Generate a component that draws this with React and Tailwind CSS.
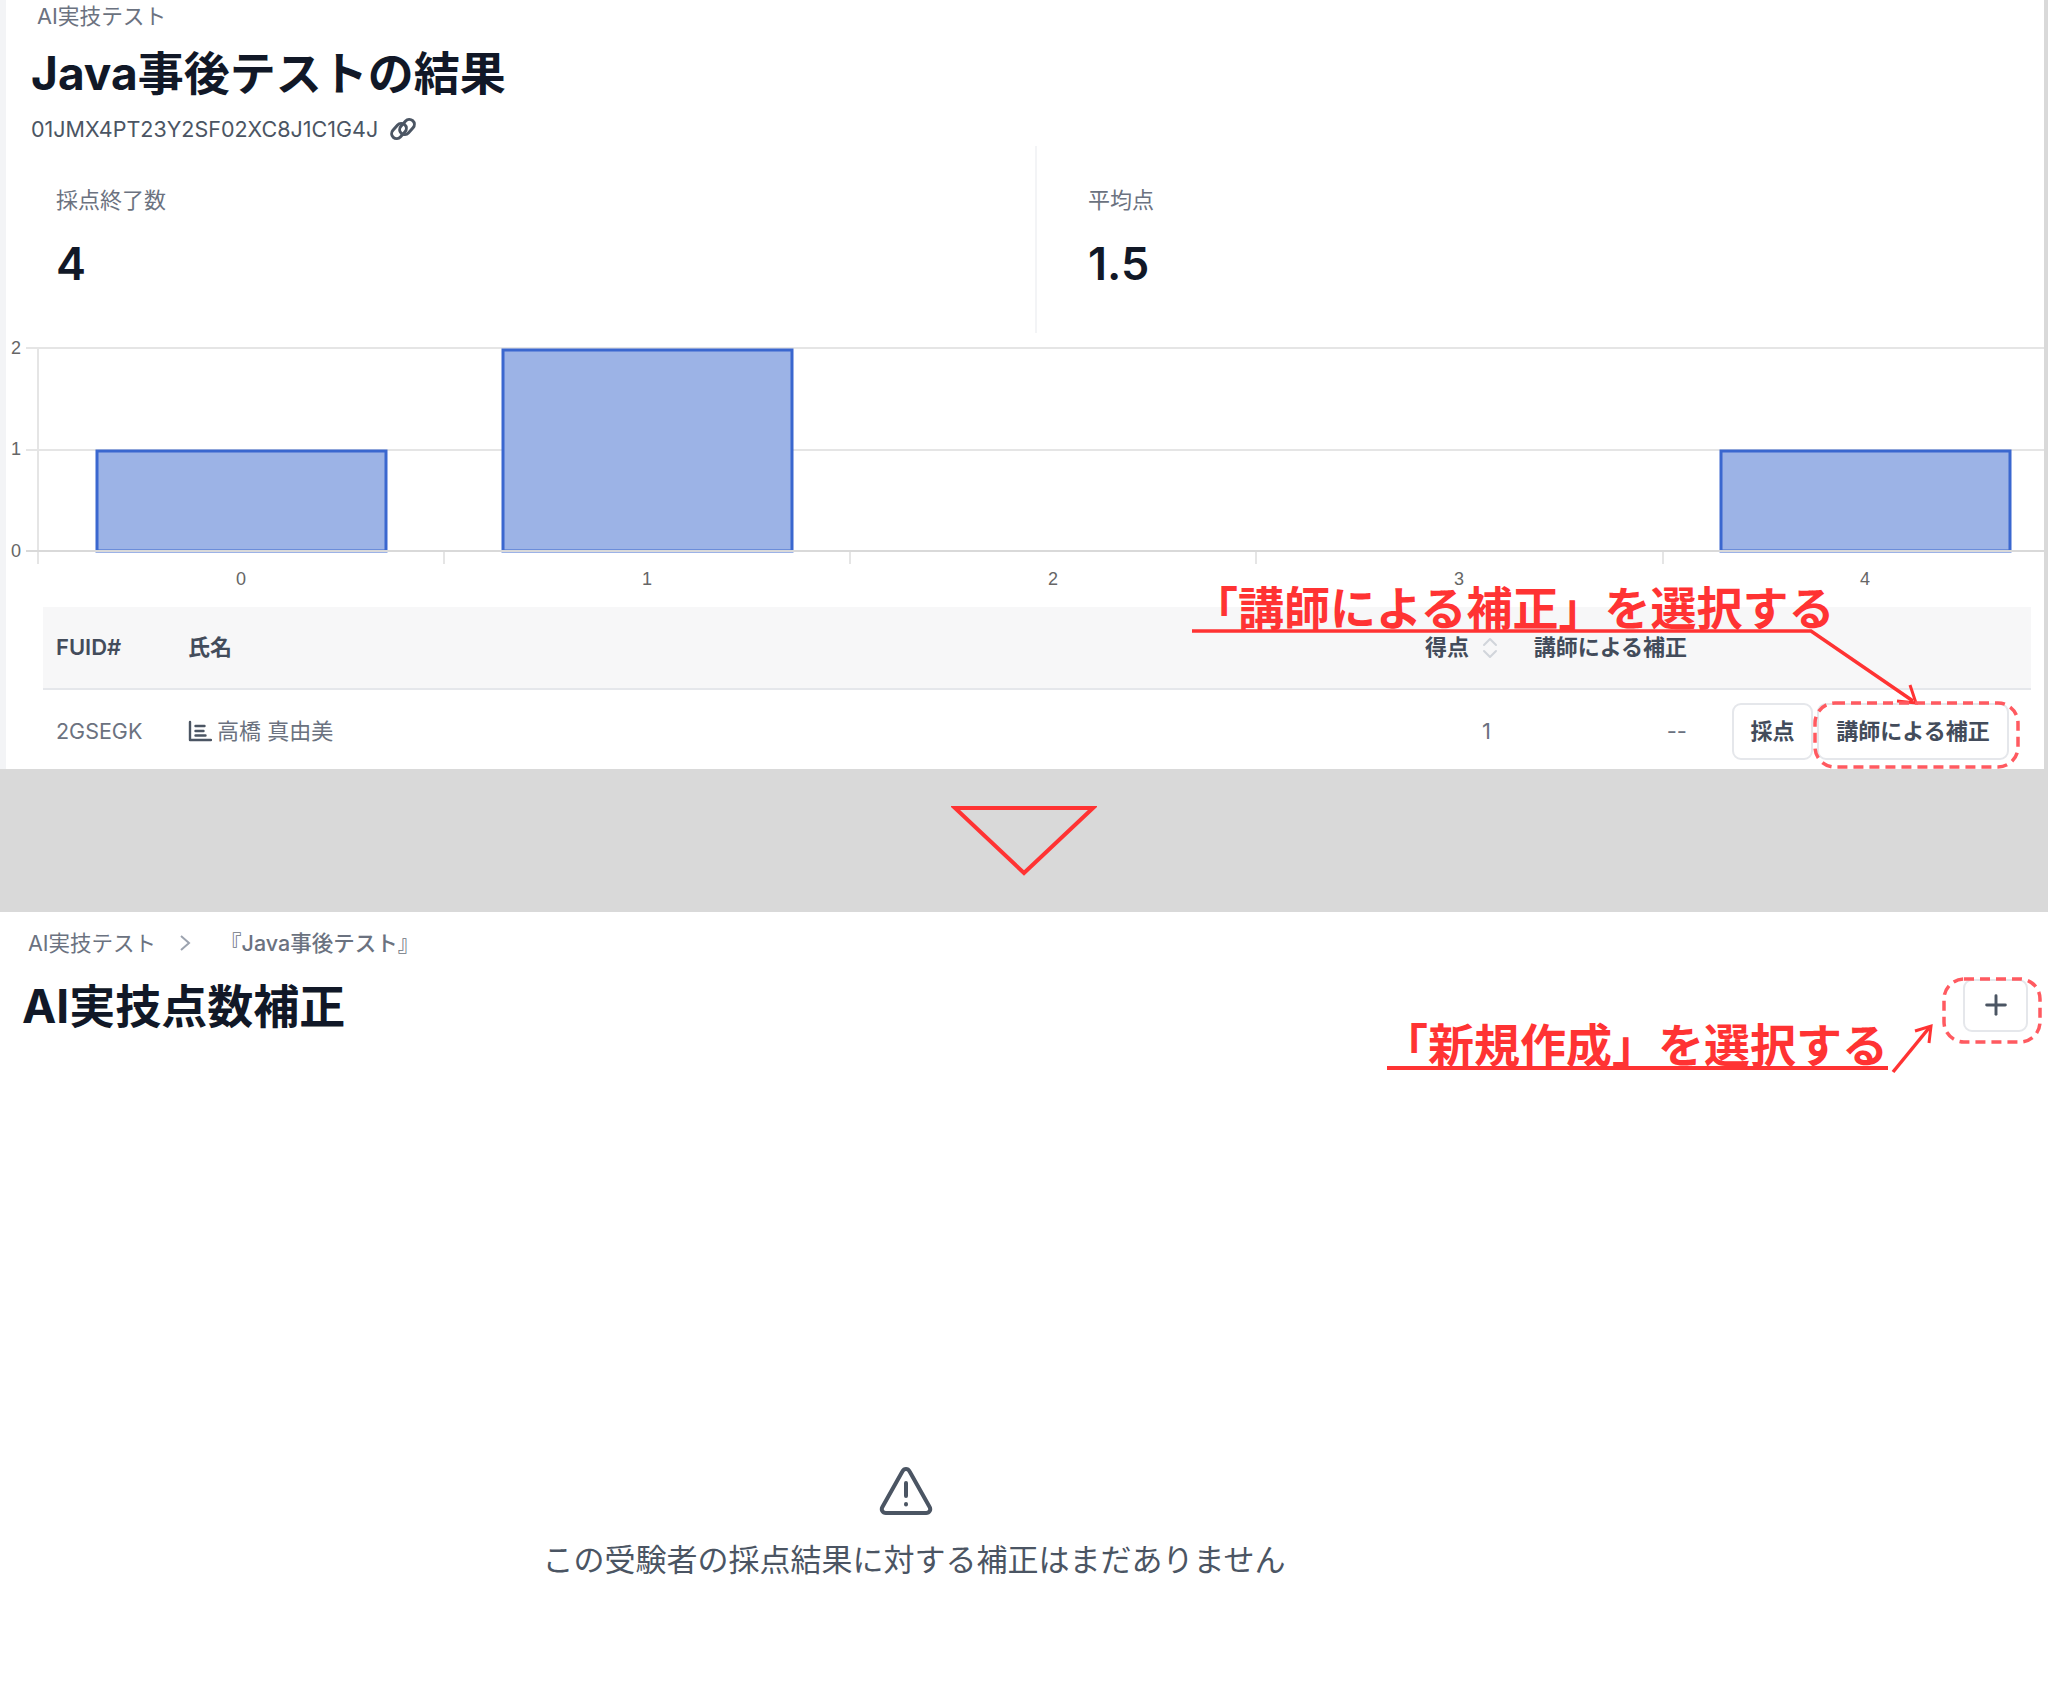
import React from "react";
import { Plus } from "lucide-react";

const RED = "#ff3333";
const DASH = "#ff5a60";

const Stat = ({ label, value, className }) => (
  <div className={`h-full pt-[38px] ${className}`}>
    <div className="text-[22px] leading-[32px] text-[#6b7280]">{label}</div>
    <div className="mt-[18px] text-[45px] leading-[60px] font-semibold text-[#111827]">{value}</div>
  </div>
);

const Chart = () => {
  const ticks = [38, 444, 850, 1256, 1663];
  const bars = [
    { x: 97, w: 289, top: 451 },
    { x: 503, w: 289, top: 350 },
    { x: 1721, w: 289, top: 451 },
  ];
  const labels = [241, 647, 1053, 1459, 1865];
  return (
    <svg className="block" width="2038" height="262" viewBox="6 333 2038 262">
      <g stroke="#e5e5e5" strokeWidth="2" fill="none">
        <path d="M26 348H2044M26 450H2044M38 348V564" />
        {ticks.slice(1).map((t) => (
          <path key={t} d={`M${t} 551V564`} />
        ))}
      </g>
      {bars.map((b) => (
        <rect key={b.x} x={b.x} y={b.top} width={b.w} height={551 - b.top} fill="#9cb3e6" stroke="#3a67cf" strokeWidth="3" />
      ))}
      <path d="M26 551H2044" stroke="#d9d9d9" strokeWidth="2" />
      <g fontFamily="Liberation Sans, sans-serif" fontSize="18" fill="#666666">
        <text x="16" y="354" textAnchor="middle">2</text>
        <text x="16" y="455" textAnchor="middle">1</text>
        <text x="16" y="557" textAnchor="middle">0</text>
        {labels.map((x, i) => (
          <text key={x} x={x} y="585" textAnchor="middle">{i}</text>
        ))}
      </g>
    </svg>
  );
};

const LinkIcon = () => (
  <svg width="28" height="28" viewBox="0 0 28 28" fill="none" stroke="#4b5563" strokeWidth="3">
    <rect x="1.500" y="11" width="17" height="10" rx="5" transform="rotate(-48 10 16)" />
    <rect x="9.500" y="7" width="17" height="10" rx="5" transform="rotate(-48 18 12)" />
  </svg>
);

const SortIcon = () => (
  <svg width="20" height="24" viewBox="0 0 20 24" fill="none" stroke="#d1d5db" strokeWidth="2" strokeLinecap="round" strokeLinejoin="round">
    <path d="M4 9l6-6 6 6M4 15l6 6 6-6" />
  </svg>
);

const RowIcon = () => (
  <svg width="24" height="24" viewBox="0 0 24 24" fill="none" stroke="#4b5563" strokeWidth="2.400" strokeLinecap="round" strokeLinejoin="round">
    <path d="M2 3v18h21M7.500 7h9M7.500 12h8M7.500 16.500h10" />
  </svg>
);

const Btn = ({ children, className }) => (
  <button className={`h-[57px] rounded-[9px] border-2 border-[#e5e7eb] bg-white text-[22px] font-semibold text-[#434c5b] ${className}`}>
    {children}
  </button>
);

const Results = () => (
  <div className="h-[769px] border-l-[6px] border-r-4 border-l-[#f3f4f6] border-r-[#d9d9d9]">
    <div className="flex h-[32px] items-center pl-[31px] text-[21.700px] text-[#6b7280]">AI実技テスト</div>
    <h1 className="flex h-[80px] items-center pl-[25px] pt-[2px] text-[46px] font-bold text-[#111827]">Java事後テストの結果</h1>
    <div className="flex h-[34px] items-center gap-[11px] pl-[25px] text-[21.500px] text-[#4b5563]">
      01JMX4PT23Y2SF02XC8J1C1G4J
      <LinkIcon />
    </div>
    <div className="flex h-[187px]">
      <Stat label="採点終了数" value="4" className="w-[1031px] border-r-2 border-[#f3f4f6] pl-[50px]" />
      <Stat label="平均点" value="1.5" className="flex-1 pl-[51px]" />
    </div>
    <Chart />
    <div className="mt-[12px] ml-[37px] mr-[13px]">
      <div className="flex h-[83px] items-center border-b-2 border-[#e5e7eb] bg-[#f7f7f8] text-[22px] font-semibold text-[#434c5b]">
        <div className="w-[145px] pl-[13px]">FUID#</div>
        <div className="flex-1">氏名</div>
        <div className="flex w-[100px] items-center justify-end gap-[11px]">
          得点
          <SortIcon />
        </div>
        <div className="w-[187px] text-right">講師による補正</div>
        <div className="w-[344px]" />
      </div>
      <div className="flex h-[79px] items-center pt-[3px] text-[22px] text-[#6b7280]">
        <div className="w-[145px] pl-[13px] text-[21.500px]">2GSEGK</div>
        <div className="flex flex-1 items-center gap-[5px]">
          <RowIcon />
          高橋 真由美
        </div>
        <div className="w-[100px] pr-[9px] text-right">1</div>
        <div className="w-[187px] text-right">--</div>
        <div className="flex w-[344px] justify-end gap-[4px] pr-[22px]">
          <Btn className="w-[81px]">採点</Btn>
          <Btn className="w-[192px]">講師による補正</Btn>
        </div>
      </div>
    </div>
  </div>
);

const Divider = () => (
  <div className="flex h-[143px] items-start justify-center bg-[#d9d9d9]">
    <svg className="mt-[37px]" width="146" height="72" viewBox="0 0 146 72" fill="none" stroke={RED} strokeWidth="4">
      <path d="M4 2H142L73 67Z" />
    </svg>
  </div>
);

const Corrections = () => (
  <div>
    <div className="flex h-[62px] items-center pl-[28px] text-[21.500px] text-[#6b7280]">
      AI実技テスト
      <svg className="ml-[22px] mr-[28px]" width="14" height="20" viewBox="0 0 14 20" fill="none" stroke="#9ca3af" strokeWidth="2">
        <path d="M3 3l8 7-8 7" />
      </svg>
      <span className="font-medium">『Java事後テスト』</span>
    </div>
    <div className="flex h-[62px] items-center justify-between pl-[22px] pr-[20px]">
      <h2 className="pt-[2px] text-[46px] font-bold text-[#111827]">AI実技点数補正</h2>
      <button className="flex h-[53px] w-[65px] items-center justify-center rounded-[9px] border-2 border-[#e5e7eb] bg-white text-[#4b5563]">
        <Plus size={32} strokeWidth={2.2} />
      </button>
    </div>
    <div className="mt-[430px] flex flex-col items-center pr-[220px]">
      <svg className="mr-[16px]" width="54" height="50" viewBox="0 0 54 50" fill="none" stroke="#4b5563" strokeWidth="4" strokeLinecap="round" strokeLinejoin="round">
        <path d="M27 3c-1.600 0-2.700 .8-3.500 2.300L3.400 41c-1.600 2.900 .2 6 3.500 6h40.200c3.300 0 5.100-3.100 3.500-6L30.500 5.300C29.700 3.800 28.600 3 27 3Z" />
        <path d="M27 17v13M27 38v.4" />
      </svg>
      <p className="mt-[22px] text-[31px] leading-[44px] text-[#4b5563]">この受験者の採点結果に対する補正はまだありません</p>
    </div>
  </div>
);

// red notes drawn on top of the screenshot
const Annotations = () => (
  <>
    <svg className="absolute inset-0" width="2048" height="1682" viewBox="0 0 2048 1682" fill="none">
      <g stroke={RED} strokeWidth="4">
        <path d="M1192 631H1811L1913 701" strokeWidth="3.500" />
        <path d="M1897 701L1916 703L1910 685" strokeWidth="3" />
        <path d="M1387 1068H1888" />
        <path d="M1893 1072L1929 1028" strokeWidth="3.500" />
        <path d="M1915 1031L1931 1026L1929 1043" strokeWidth="3" />
      </g>
      <rect x="1815" y="703" width="203" height="64" rx="20" stroke={DASH} strokeWidth="3.500" strokeDasharray="10 6" />
      <rect x="1944" y="979" width="96" height="63" rx="20" stroke={DASH} strokeWidth="3.500" strokeDasharray="10 6" />
    </svg>
    <div className="absolute left-[1192px] top-[580px] whitespace-nowrap text-[46px] leading-[56px] font-bold text-[#ff3333]">「講師による補正」を選択する</div>
    <div className="absolute left-[1382px] top-[1017px] whitespace-nowrap text-[46px] leading-[56px] font-bold text-[#ff3333]">「新規作成」を選択する</div>
  </>
);

export default function App() {
  return (
    <div className="relative h-[1682px] w-[2048px] overflow-hidden bg-white font-['Inter','Noto_Sans_CJK_JP',sans-serif]">
      <Results />
      <Divider />
      <Corrections />
      <Annotations />
    </div>
  );
}
